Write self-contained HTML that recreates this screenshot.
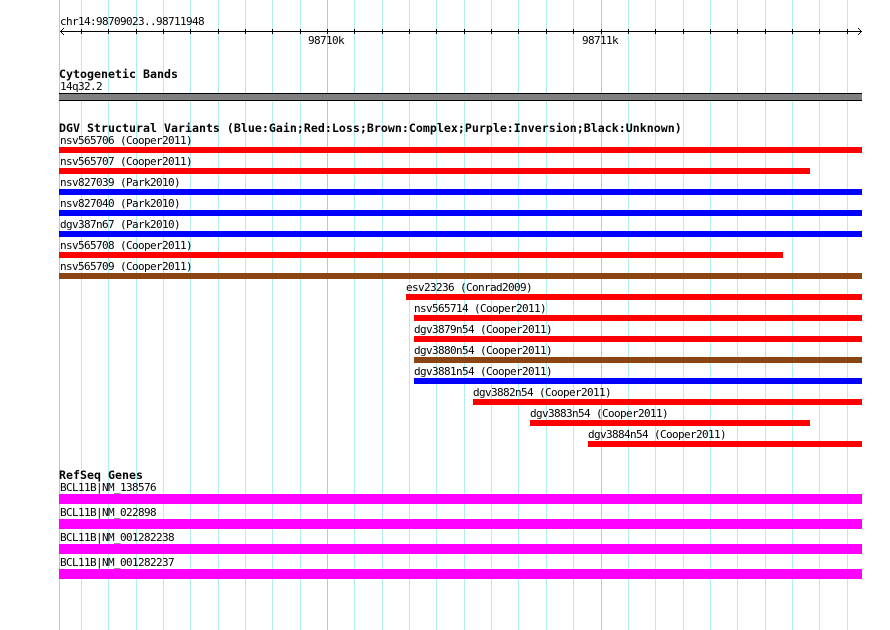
<!DOCTYPE html>
<html>
<head>
<meta charset="utf-8">
<style>
html,body{margin:0;padding:0;background:#fff;width:890px;height:630px;overflow:hidden}
svg{display:block}
text{font-family:"DejaVu Sans Mono","Liberation Mono",monospace;font-size:11px;letter-spacing:-0.622px;fill:#000;white-space:pre}
text.b{font-weight:bold;font-size:11.6px;letter-spacing:0.017px}
</style>
</head>
<body>
<svg width="890" height="630" viewBox="0 0 890 630" xmlns="http://www.w3.org/2000/svg">
<g shape-rendering="crispEdges">
<rect width="890" height="630" fill="#fff"/>
<g fill="#b0eeee">
<rect x="81" y="0" width="1" height="630"/><rect x="108" y="0" width="1" height="630"/><rect x="136" y="0" width="1" height="630"/><rect x="163" y="0" width="1" height="630"/><rect x="190" y="0" width="1" height="630"/><rect x="218" y="0" width="1" height="630"/><rect x="245" y="0" width="1" height="630"/><rect x="272" y="0" width="1" height="630"/><rect x="300" y="0" width="1" height="630"/><rect x="354" y="0" width="1" height="630"/><rect x="382" y="0" width="1" height="630"/><rect x="409" y="0" width="1" height="630"/><rect x="436" y="0" width="1" height="630"/><rect x="464" y="0" width="1" height="630"/><rect x="491" y="0" width="1" height="630"/><rect x="518" y="0" width="1" height="630"/><rect x="546" y="0" width="1" height="630"/><rect x="573" y="0" width="1" height="630"/><rect x="628" y="0" width="1" height="630"/><rect x="655" y="0" width="1" height="630"/><rect x="683" y="0" width="1" height="630"/><rect x="710" y="0" width="1" height="630"/><rect x="737" y="0" width="1" height="630"/><rect x="765" y="0" width="1" height="630"/><rect x="792" y="0" width="1" height="630"/><rect x="819" y="0" width="1" height="630"/><rect x="847" y="0" width="1" height="630"/>
</g>
<g fill="#9fd0ea">
<rect x="59" y="0" width="1" height="630"/><rect x="327" y="0" width="1" height="630"/><rect x="601" y="0" width="1" height="630"/>
</g>
<!-- axis -->
<g fill="#000">
<rect x="60" y="31" width="802" height="1"/>
<rect x="81" y="29" width="1" height="5"/><rect x="108" y="29" width="1" height="5"/><rect x="136" y="29" width="1" height="5"/><rect x="163" y="29" width="1" height="5"/><rect x="190" y="29" width="1" height="5"/><rect x="218" y="29" width="1" height="5"/><rect x="245" y="29" width="1" height="5"/><rect x="272" y="29" width="1" height="5"/><rect x="300" y="29" width="1" height="5"/><rect x="327" y="29" width="1" height="5"/><rect x="354" y="29" width="1" height="5"/><rect x="382" y="29" width="1" height="5"/><rect x="409" y="29" width="1" height="5"/><rect x="436" y="29" width="1" height="5"/><rect x="464" y="29" width="1" height="5"/><rect x="491" y="29" width="1" height="5"/><rect x="518" y="29" width="1" height="5"/><rect x="546" y="29" width="1" height="5"/><rect x="573" y="29" width="1" height="5"/><rect x="601" y="29" width="1" height="5"/><rect x="628" y="29" width="1" height="5"/><rect x="655" y="29" width="1" height="5"/><rect x="683" y="29" width="1" height="5"/><rect x="710" y="29" width="1" height="5"/><rect x="737" y="29" width="1" height="5"/><rect x="765" y="29" width="1" height="5"/><rect x="792" y="29" width="1" height="5"/><rect x="819" y="29" width="1" height="5"/><rect x="847" y="29" width="1" height="5"/>
<!-- left arrow -->
<rect x="61" y="30" width="1" height="3"/><rect x="62" y="29" width="1" height="1"/><rect x="62" y="33" width="1" height="1"/><rect x="63" y="28" width="1" height="1"/><rect x="63" y="34" width="1" height="1"/>
<!-- right arrow -->
<rect x="860" y="30" width="1" height="3"/><rect x="859" y="29" width="1" height="1"/><rect x="859" y="33" width="1" height="1"/><rect x="858" y="28" width="1" height="1"/><rect x="858" y="34" width="1" height="1"/>
</g>
<!-- cyto band -->
<rect x="59" y="93" width="803" height="8" fill="#000"/>
<rect x="59" y="94" width="803" height="6" fill="#808080"/>
<!-- DGV bars -->
<g fill="#ff0000">
<rect x="59" y="147" width="803" height="6"/>
<rect x="59" y="168" width="751" height="6"/>
<rect x="59" y="252" width="724" height="6"/>
<rect x="406" y="294" width="456" height="6"/>
<rect x="414" y="315" width="448" height="6"/>
<rect x="414" y="336" width="448" height="6"/>
<rect x="473" y="399" width="389" height="6"/>
<rect x="530" y="420" width="280" height="6"/>
<rect x="588" y="441" width="274" height="6"/>
</g>
<g fill="#0000ff">
<rect x="59" y="189" width="803" height="6"/>
<rect x="59" y="210" width="803" height="6"/>
<rect x="59" y="231" width="803" height="6"/>
<rect x="414" y="378" width="448" height="6"/>
</g>
<g fill="#8b4513">
<rect x="59" y="273" width="803" height="6"/>
<rect x="414" y="357" width="448" height="6"/>
</g>
<!-- genes -->
<g fill="#ff00ff">
<rect x="59" y="494" width="803" height="10"/>
<rect x="59" y="519" width="803" height="10"/>
<rect x="59" y="544" width="803" height="10"/>
<rect x="59" y="569" width="803" height="10"/>
</g>
</g>
<text x="60" y="25">chr14:98709023..98711948</text>
<text x="308" y="44">98710k</text>
<text x="582" y="44">98711k</text>
<text class="b" x="59" y="78">Cytogenetic Bands</text>
<text x="60" y="90">14q32.2</text>
<text class="b" x="59" y="132">DGV Structural Variants (Blue:Gain;Red:Loss;Brown:Complex;Purple:Inversion;Black:Unknown)</text>
<text x="60" y="144">nsv565706 (Cooper2011)</text>
<text x="60" y="165">nsv565707 (Cooper2011)</text>
<text x="60" y="186">nsv827039 (Park2010)</text>
<text x="60" y="207">nsv827040 (Park2010)</text>
<text x="60" y="228">dgv387n67 (Park2010)</text>
<text x="60" y="249">nsv565708 (Cooper2011)</text>
<text x="60" y="270">nsv565709 (Cooper2011)</text>
<text x="406" y="291">esv23236 (Conrad2009)</text>
<text x="414" y="312">nsv565714 (Cooper2011)</text>
<text x="414" y="333">dgv3879n54 (Cooper2011)</text>
<text x="414" y="354">dgv3880n54 (Cooper2011)</text>
<text x="414" y="375">dgv3881n54 (Cooper2011)</text>
<text x="473" y="396">dgv3882n54 (Cooper2011)</text>
<text x="530" y="417">dgv3883n54 (Cooper2011)</text>
<text x="588" y="438">dgv3884n54 (Cooper2011)</text>
<text class="b" x="59" y="479">RefSeq Genes</text>
<text x="60" y="491">BCL11B|NM_138576</text>
<text x="60" y="516">BCL11B|NM_022898</text>
<text x="60" y="541">BCL11B|NM_001282238</text>
<text x="60" y="566">BCL11B|NM_001282237</text>
</svg>
</body>
</html>
